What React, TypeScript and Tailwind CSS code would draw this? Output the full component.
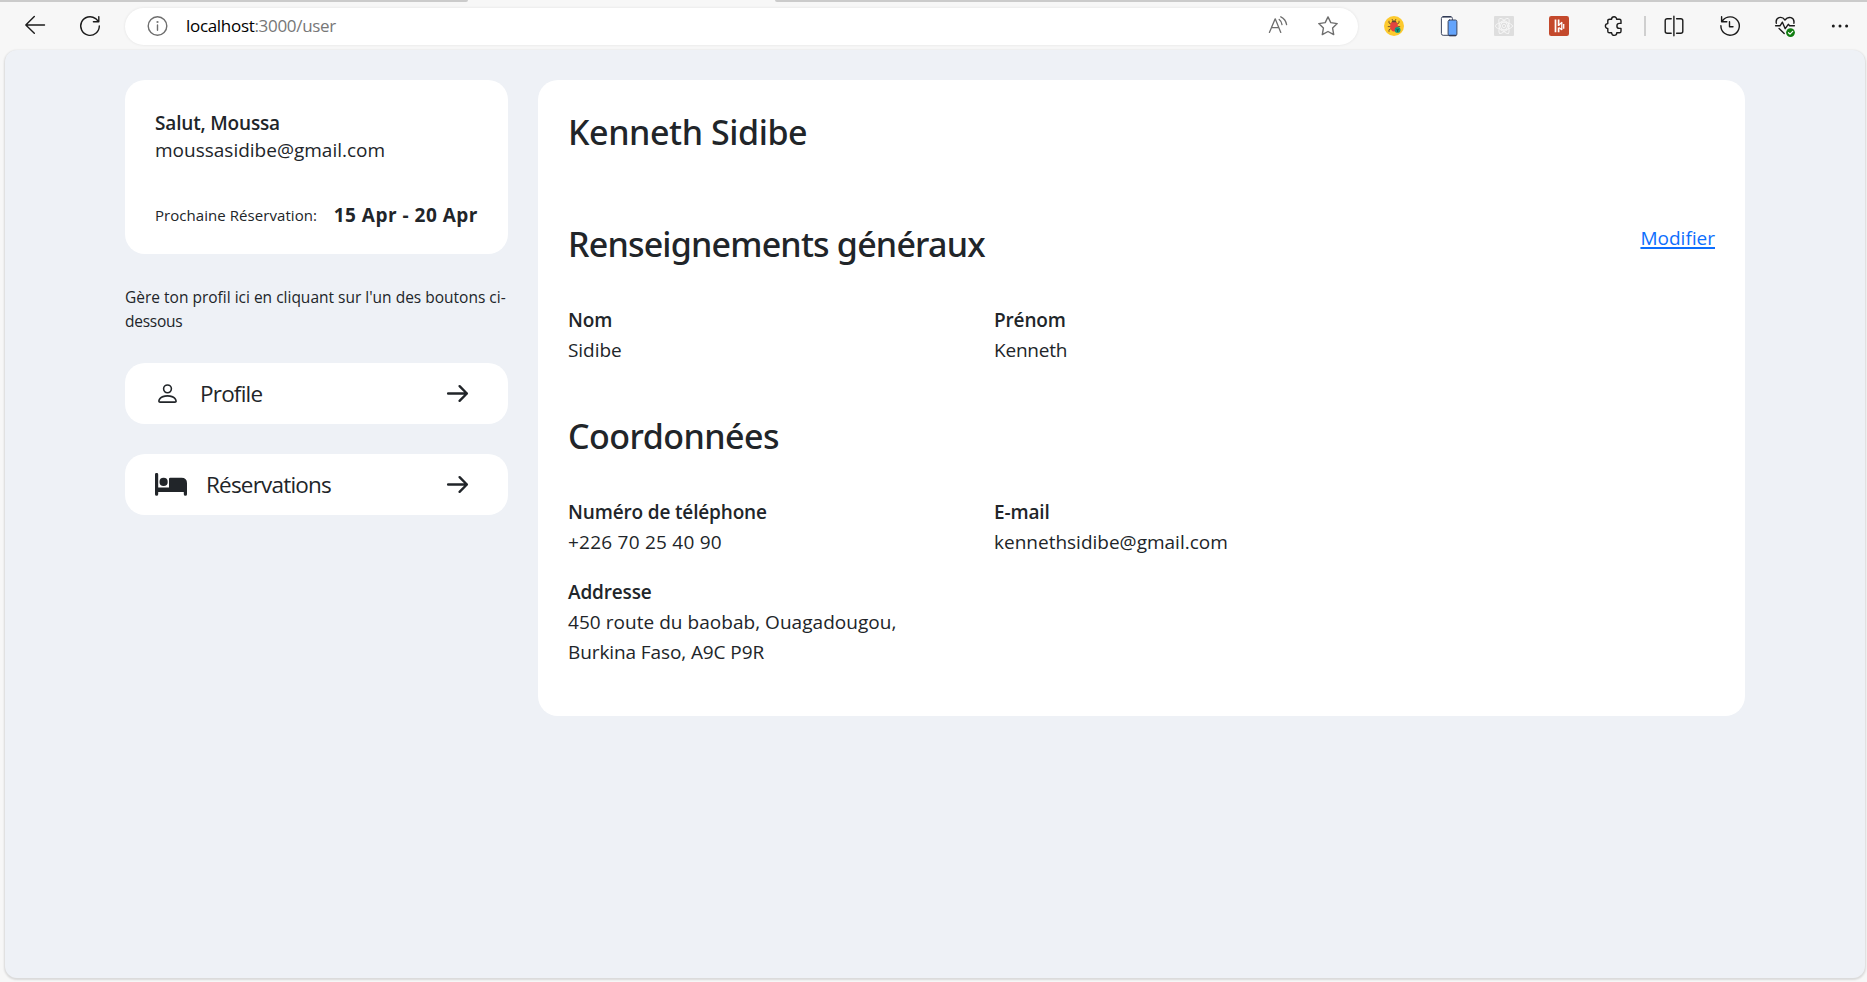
import type { ReactNode } from "react";
import { BsPerson } from "react-icons/bs";
import { HiOutlineArrowRight } from "react-icons/hi";

function Icon({ children, className = "" }: { children: ReactNode; className?: string }) {
  return (
    <svg
      viewBox="0 0 20 20"
      fill="none"
      stroke="#1b1b1b"
      strokeWidth="1.4"
      strokeLinecap="round"
      strokeLinejoin="round"
      className={`size-5 shrink-0 overflow-visible ${className}`}
    >
      {children}
    </svg>
  );
}

function BedIcon() {
  return (
    <svg viewBox="0 0 32 23" fill="currentColor" className="mb-[1px] h-[23px] w-[32px] shrink-0">
      <path d="M0 1.5a1.6 1.6 0 0 1 3.2 0V14.4H14V6Q14 4.8 15.2 4.8H26.5Q32 4.8 32 10.3V21.2a1.6 1.6 0 0 1-3.2 0V18.9H3.2V21.2a1.6 1.6 0 0 1-3.2 0Z" />
      <circle cx="8.6" cy="8.9" r="4.1" />
    </svg>
  );
}

function Toolbar() {
  return (
    <header className="flex h-[50px] shrink-0 flex-col">
      <div className="flex h-[2px] shrink-0 justify-between">
        <div className="w-[468px] rounded-br-[4px] bg-[#cbcbcb]" />
        <div className="w-[1092px] rounded-bl-[4px] bg-[#cbcbcb]" />
      </div>
      <div className="flex h-[48px] shrink-0 items-center">
        <Icon className="ml-[25px]">
          <path d="M19.5 9H.8M9.3.5.8 9l8.5 8.3" />
        </Icon>
        <Icon className="ml-[35px]">
          <path d="M19.3 10A9.3 9.3 0 1 1 15.6 2.6L18.6 5.6M18.8.6V5.8H13.4" />
        </Icon>
        <div className="ml-[25px] flex h-[37px] w-[1233px] items-center rounded-full bg-white shadow-[0_0_3px_rgba(0,0,0,0.09)]">
          <Icon className="ml-[22px]">
            <g stroke="#6e6e6e">
              <circle cx="10.5" cy="10" r="9.3" />
              <path d="M10.5 9v5.3" />
              <circle cx="10.5" cy="6" r=".4" fill="#6e6e6e" />
            </g>
          </Icon>
          <div className="ml-[19px] text-[17px] leading-[24px] tracking-[-0.31px] text-[#777]">
            <span className="text-black">localhost</span>:3000/user
          </div>
          <Icon className="ml-auto">
            <g stroke="#6e6e6e" strokeWidth="1.3">
              <path d="M1.4 16.4 7.2 2.8 12.8 16.4M3.6 11.6H10.8" />
              <path d="M11.2 3.4A7 7 0 0 1 14 8.6M12.8.8A10.5 10.5 0 0 1 18.6 8.6" />
            </g>
          </Icon>
          <Icon className="mr-[20px] ml-[30px]">
            <path
              stroke="#6e6e6e"
              d="M10 .9 12.8 6.6 19.2 7.6 14.6 12.1 15.7 18.6 10 15.5 4.3 18.6 5.4 12.1.8 7.6 7.2 6.6Z"
            />
          </Icon>
        </div>
        <div className="ml-[26px] flex items-center">
          <Icon>
            <circle cx="10" cy="10" r="10" fill="#fdca2e" stroke="none" />
            <path
              d="M5 5.2V7L7 8M15 5.2V7L13 8M4.2 10.6H7M13 10.6H15.8M5 15.4V13.8L7 12.6M8.2 3.4 9 4.8M11.8 3.4 11 4.8"
              stroke="#6b4a2e"
              strokeWidth=".9"
            />
            <ellipse cx="10" cy="10.2" rx="3.9" ry="5.2" fill="#e2443f" stroke="none" />
            <path d="M7.4 6.2a2.7 2.4 0 0 1 5.2 0Z" fill="#5a4636" stroke="none" />
            <circle cx="13.6" cy="13.9" r="2.9" fill="#0d9b83" stroke="none" />
            <path d="m12.5 13 1.1 1.2 1.1-1.2M13.6 14.2v1.5" stroke="#21483f" strokeWidth=".8" />
          </Icon>
          <Icon className="ml-[35px]">
            <rect x="2.4" y=".7" width="11" height="18.6" rx="1.8" fill="#fff" stroke="#3c4660" strokeWidth="1" />
            <rect x="9.1" y="4" width="8.8" height="15.6" rx="1.5" fill="#64a4fb" stroke="#3c4660" strokeWidth="1" />
            <path d="M4.5.8h7M10.6 19.5h6" stroke="#303a55" />
          </Icon>
          <Icon className="ml-[35px]">
            <rect width="20" height="20" rx="1" fill="#dedede" stroke="none" />
            <g stroke="#f8f8f8" strokeWidth=".8">
              <ellipse cx="10" cy="10" rx="8.6" ry="3.5" />
              <ellipse cx="10" cy="10" rx="8.6" ry="3.5" transform="rotate(60 10 10)" />
              <ellipse cx="10" cy="10" rx="8.6" ry="3.5" transform="rotate(120 10 10)" />
              <circle cx="10" cy="10" r="5.2" />
              <circle cx="10" cy="10" r="1.7" />
            </g>
          </Icon>
          <Icon className="ml-[35px]">
            <rect width="20" height="20" rx="2.2" fill="#c4492c" stroke="none" />
            <path d="M6.5 3.6V16.2M9.6 3.6V10M9.6 11.6V16.2" stroke="#fff" strokeWidth="1.7" strokeLinecap="butt" />
            <path d="M10.4 8.6 12.8 6.4V13.6L10.4 12" stroke="#fff" strokeWidth="1.3" />
            <path d="M14.7 8V12.8" stroke="#fff" strokeWidth="1.3" strokeLinecap="butt" />
          </Icon>
          <Icon className="ml-[35px]">
            <path d="M5.8 3.2H7.6A2.5 2.5 0 0 1 12.6 3.2H15.4Q17 3.2 17 4.8V7.4H15.4A2.3 2.3 0 0 0 15.4 12.4H17V15.2Q17 16.8 15.4 16.8H12.8A2.5 2.5 0 0 1 7.6 16.8H5.4Q3.8 16.8 3.8 15.2V12.4A2.4 2.4 0 0 1 3.8 7.6V4.8Q3.8 3.2 5.8 3.2" />
          </Icon>
          <div className="ml-[20px] h-5 w-[2px] bg-[#cfcfcf]" />
          <Icon className="ml-[18px]">
            <path d="M7.2 2.8H3.2Q1.2 2.8 1.2 4.8V15.2Q1.2 17.2 3.2 17.2H7.2M12.6 2.8H16.8Q18.8 2.8 18.8 4.8V15.2Q18.8 17.2 16.8 17.2H12.6M9.9.2V19.8" />
          </Icon>
          <Icon className="ml-[36px]">
            <path d="M.9 9.8A9.2 9.2 0 1 0 2.9 4.3L1.8 5.8M1.6.7V5.8H6.8M9.5 5.7V10.8H13" />
          </Icon>
          <Icon className="ml-[35px]">
            <path d="M1.3 7.2C.2 1.3 6.7-.5 10 4 13.3-.5 19.8 1.3 18.9 7.2M.6 9.8H5L7.4 6.2 10.2 12.7 13.3 8.3 14.6 9.8H19.4M4.1 12.5 9.2 17.4" />
            <circle cx="15.5" cy="16.6" r="4.4" fill="#107c10" stroke="none" />
            <path d="m13.5 16.7 1.5 1.4 2.7-2.8" stroke="#fff" strokeWidth="1.2" />
          </Icon>
          <Icon className="ml-[34px]">
            <g fill="#1b1b1b" stroke="none">
              <circle cx="4.3" cy="10" r="1.5" />
              <circle cx="11" cy="10" r="1.5" />
              <circle cx="17.6" cy="10" r="1.5" />
            </g>
          </Icon>
        </div>
      </div>
    </header>
  );
}

function MenuButton({ icon, label, className }: { icon: ReactNode; label: string; className: string }) {
  return (
    <button className="mt-[30px] flex h-[61px] w-full items-center rounded-[20px] bg-white px-[30px] text-[22.5px] leading-[61px]">
      {icon}
      <span className={`tracking-[-0.8px] ${className}`}>{label}</span>
      <HiOutlineArrowRight className="mr-[8px] ml-auto size-[25px] [&_path]:[stroke-width:2.3]" />
    </button>
  );
}

function Field({ label, children }: { label: string; children: ReactNode }) {
  return (
    <div>
      <div className="font-semibold tracking-[-0.15px]">{label}</div>
      {children}
    </div>
  );
}

function Heading({ children, className }: { children: ReactNode; className: string }) {
  return (
    <h3 className={`font-['Noto_Sans',sans-serif] text-[34px] leading-[42px] font-medium ${className}`}>
      {children}
    </h3>
  );
}

export default function App() {
  return (
    <div className="flex h-[982px] w-[1867px] flex-col bg-[#f7f7f7] font-['Open_Sans',sans-serif] text-[#212529]">
      <Toolbar />
      <main className="mr-[2px] mb-[4px] ml-[5px] flex flex-1 items-start rounded-[12px] bg-[#eef1f6] pt-[30px] pl-[120px] shadow-[0_1px_2px_1px_rgba(0,0,0,0.12)]">
        <aside className="w-[383px]">
          <section className="h-[174px] rounded-[20px] bg-white px-[30px] pt-[30px] text-[19px] leading-[27px]">
            <div className="font-semibold tracking-[-0.17px]">Salut, Moussa</div>
            <div>moussasidibe@gmail.com</div>
            <div className="mt-[36px] flex items-center justify-between leading-[30px] whitespace-nowrap">
              <span className="text-[15px] tracking-[0.06px]">Prochaine Réservation:</span>
              <span className="font-bold tracking-[0.5px]">15 Apr - 20 Apr</span>
            </div>
          </section>
          <p className="mt-[31px] text-[15.5px] leading-[24px] whitespace-nowrap">
            Gère ton profil ici en cliquant sur l'un des boutons ci-
            <br />
            <span className="tracking-[-0.25px]">dessous</span>
          </p>
          <MenuButton icon={<BsPerson className="size-[25px]" />} label="Profile" className="ml-[20px]" />
          <MenuButton icon={<BedIcon />} label="Réservations" className="ml-[19px]" />
        </aside>
        <section className="ml-[30px] h-[636px] w-[1207px] rounded-[20px] bg-white px-[30px] pt-[31px] text-[19px] leading-[30px]">
          <Heading className="tracking-[-0.42px]">Kenneth Sidibe</Heading>
          <div className="mt-[70px] flex items-start justify-between">
            <Heading className="tracking-[-0.8px]">Renseignements généraux</Heading>
            <a className="text-[#0d6efd] underline decoration-2 underline-offset-[2px]">Modifier</a>
          </div>
          <div className="mt-[40px] grid grid-cols-[426px_1fr]">
            <Field label="Nom">
              <span className="tracking-[-0.05px]">Sidibe</span>
            </Field>
            <Field label="Prénom">
              <span className="tracking-[-0.2px]">Kenneth</span>
            </Field>
          </div>
          <Heading className="mt-[50px] tracking-[-0.54px]">Coordonnées</Heading>
          <div className="mt-[40px] grid grid-cols-[426px_1fr] gap-y-[20px]">
            <Field label="Numéro de téléphone">
              <span className="tracking-[0.24px]">+226 70 25 40 90</span>
            </Field>
            <Field label="E-mail">kennethsidibe@gmail.com</Field>
            <Field label="Addresse">
              <span className="tracking-[0.04px]">450 route du baobab, Ouagadougou,</span>
              <br />
              <span className="tracking-[-0.1px]">Burkina Faso, A9C P9R</span>
            </Field>
          </div>
        </section>
      </main>
    </div>
  );
}
